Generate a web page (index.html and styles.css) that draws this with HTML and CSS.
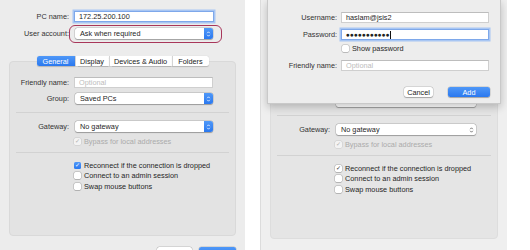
FILE: index.html
```html
<!DOCTYPE html>
<html lang="en">
<head>
  <meta charset="UTF-8" />
  <meta name="viewport" content="width=device-width, initial-scale=1.0"/>
  <title>Add PC</title>
  <link rel="stylesheet" href="styles.css">
</head>
<body>
<div class="win">
  <div class="head">
    <div class="row"><span class="lbl">PC name:</span><div class="field focus">172.25.200.100</div></div>
    <div class="row gap6"><span class="lbl">User account:</span>
      <div class="popup marked">Ask when required<span class="step"><svg viewBox="0 0 5 8"><path d="M1.2 3.2 2.5 1.8 3.8 3.2M1.2 4.8 2.5 6.2 3.8 4.8"/></svg></span></div>
    </div>
  </div>
  <div class="tabs">
    <span class="tab on w38">General</span><span class="tab w34">Display</span><span class="tab w63">Devices &amp; Audio</span><span class="tab w37">Folders</span>
  </div>
  <div class="group">
    <div class="row"><span class="lbl">Friendly name:</span><div class="field ph">Optional</div></div>
    <div class="row gap5"><span class="lbl">Group:</span>
      <div class="popup">Saved PCs<span class="step"><svg viewBox="0 0 5 8"><path d="M1.2 3.2 2.5 1.8 3.8 3.2M1.2 4.8 2.5 6.2 3.8 4.8"/></svg></span></div>
    </div>
    <div class="sep"></div>
    <div class="row"><span class="lbl">Gateway:</span>
      <div class="popup">No gateway<span class="step"><svg viewBox="0 0 5 8"><path d="M1.2 3.2 2.5 1.8 3.8 3.2M1.2 4.8 2.5 6.2 3.8 4.8"/></svg></span></div>
    </div>
    <div class="check dis"><span class="box">✓</span>Bypass for local addresses</div>
    <div class="sep sep2"></div>
    <div class="check first"><span class="box on">✓</span>Reconnect if the connection is dropped</div>
    <div class="check"><span class="box"></span>Connect to an admin session</div>
    <div class="check"><span class="box"></span>Swap mouse buttons</div>
  </div>
  <div class="actions">
    <button class="btn w35">Cancel</button><button class="btn primary w37">Add</button>
  </div>
</div>

<div class="win inactive">
  <!-- top of this window sits under the sheet -->
  <div class="head covered">
    <div class="row"><span class="lbl"></span><div class="field"></div></div>
    <div class="row gap6"><span class="lbl"></span><div class="popup"></div></div>
  </div>
  <div class="tabs covered">
    <span class="tab on w38"></span><span class="tab w34"></span><span class="tab w63"></span><span class="tab w37"></span>
  </div>
  <div class="group">
    <div class="row covered"><span class="lbl"></span><div class="field"></div></div>
    <div class="row gap5"><span class="lbl"></span>
      <div class="popup wide"></div>
    </div>
    <div class="sep"></div>
    <div class="row"><span class="lbl">Gateway:</span>
      <div class="popup wide">No gateway<span class="step"><svg viewBox="0 0 5 8"><path d="M1.2 3.2 2.5 1.8 3.8 3.2M1.2 4.8 2.5 6.2 3.8 4.8"/></svg></span></div>
    </div>
    <div class="check dis"><span class="box">✓</span>Bypass for local addresses</div>
    <div class="sep sep2"></div>
    <div class="check first"><span class="box on">✓</span>Reconnect if the connection is dropped</div>
    <div class="check"><span class="box"></span>Connect to an admin session</div>
    <div class="check"><span class="box"></span>Swap mouse buttons</div>
  </div>

  <div class="sheet">
    <div class="row"><span class="lbl">Username:</span><div class="field">haslam@jsis2</div></div>
    <div class="row gap6"><span class="lbl">Password:</span><div class="field focus"><span class="dots">●●●●●●●●●●●</span><span class="caret"></span></div></div>
    <div class="check show"><span class="box"></span>Show password</div>
    <div class="row gap7"><span class="lbl">Friendly name:</span><div class="field ph">Optional</div></div>
    <div class="actions">
      <button class="btn w29">Cancel</button><button class="btn primary w42">Add</button>
    </div>
  </div>
</div>
</body>
</html>
```

FILE: styles.css
```css
* { box-sizing: border-box; }
body {
  margin: 0;
  background: #fff;
  display: flex;
  gap: 16px;
  font-family: 'Liberation Sans', Arial, sans-serif;
  font-size: 7.3px;
  color: #262626;
  overflow: hidden;
}
.win {
  position: relative;
  width: 245px;
  height: 250px;
  padding: 0 9px;
  background: #ececec;
  overflow: hidden;
}
.win.inactive {
  width: 246px;
  background: #efefef;
  box-shadow: -1px 0 0 #dcdcdc;
}
.covered { visibility: hidden; }
.head { padding-top: 11px; }
.inactive .head { padding-top: 14px; }
.row {
  display: flex;
  align-items: center;
  height: 11px;
}
.gap5 { margin-top: 5px; }
.gap6 { margin-top: 6px; }
.gap7 { margin-top: 7px; }
.lbl {
  width: 60px;
  margin-right: 5px;
  text-align: right;
  color: #333;
  white-space: nowrap;
}
.group .lbl { width: 59px; }
.field {
  width: 140px;
  height: 11px;
  padding: 0 4px;
  display: flex;
  align-items: center;
  background: #fff;
  border: 1px solid #cfcfcf;
  border-top-color: #bdbdbd;
  white-space: nowrap;
}
.group .field { width: 139px; }
.field.ph { color: #bdbdbd; }
.field.focus {
  border-color: #7ea8ea;
  box-shadow: 0 0 0 1.5px #a8c6f3;
}
.popup {
  position: relative;
  width: 138px;
  height: 11px;
  margin-left: 1px;
  padding-left: 5px;
  display: flex;
  align-items: center;
  background: #fff;
  border-radius: 2.5px;
  box-shadow: 0 0 0 0.5px rgba(0,0,0,0.18), 0 0.5px 1px rgba(0,0,0,0.25);
  white-space: nowrap;
}
.popup.wide { width: 140px; }
.step {
  margin-left: auto;
  width: 9px;
  height: 11px;
  display: flex;
  align-items: center;
  justify-content: center;
  background: linear-gradient(#4f98f8, #2a78ef);
  border-radius: 0 2.5px 2.5px 0;
}
.step svg {
  width: 5px;
  height: 8px;
  fill: none;
  stroke: #fff;
  stroke-width: 0.8;
}
.inactive .step { background: none; }
.inactive .step svg { stroke: #555; }
.popup.marked::after {
  content: "";
  position: absolute;
  top: -3.5px;
  bottom: -3.5px;
  left: -6px;
  right: -9px;
  border: 1.5px solid #a8365a;
  border-radius: 6px;
}
.tabs {
  position: relative;
  z-index: 1;
  display: flex;
  justify-content: center;
  margin: 17px 0 -5px;
  height: 10px;
}
.tab {
  display: flex;
  align-items: center;
  justify-content: center;
  height: 10px;
  background: #fff;
  border-left: 0.5px solid #d4d4d4;
  box-shadow: 0 0.5px 1px rgba(0,0,0,0.2);
  color: #222;
}
.tab:first-child { border-radius: 2.5px 0 0 2.5px; border-left: none; }
.tab:last-child { border-radius: 0 2.5px 2.5px 0; }
.tab.on {
  background: linear-gradient(#4f98f8, #2a78ef);
  color: #fff;
}
.w38 { width: 38px; }
.w34 { width: 34px; }
.w63 { width: 63px; }
.w37 { width: 37px; }
.w35 { width: 35px; }
.w29 { width: 29px; }
.w42 { width: 42px; }
.group {
  height: 175px;
  padding-top: 15px;
  background: #e3e3e3;
  border: 1px solid #d9d9d9;
  border-radius: 4px;
}
.inactive .group { background: #e5e5e5; border-color: #dddddd; }
.sep {
  height: 1px;
  margin: 8px 6px 8px;
  background: #d2d2d2;
}
.sep2 { margin: 6px 6px 7px; }
.check {
  display: flex;
  align-items: center;
  height: 10.5px;
  padding-left: 64px;
  white-space: nowrap;
}
.check.dis {
  height: 10px;
  margin-top: 4px;
  color: #ababab;
}
.box {
  width: 7px;
  height: 7px;
  margin-right: 3px;
  display: flex;
  align-items: center;
  justify-content: center;
  background: #fff;
  border-radius: 1.5px;
  box-shadow: 0 0 0 0.5px rgba(0,0,0,0.25), 0 0.5px 0.5px rgba(0,0,0,0.2);
  font-size: 6px;
  line-height: 1;
  color: #333;
}
.dis .box { background: #f3f3f3; color: #b0b0b0; box-shadow: 0 0 0 0.5px rgba(0,0,0,0.12); }
.box.on {
  background: linear-gradient(#4f98f8, #2a78ef);
  color: #fff;
  box-shadow: none;
}
.inactive .box.on {
  background: #fff;
  color: #333;
  box-shadow: 0 0 0 0.5px rgba(0,0,0,0.25), 0 0.5px 0.5px rgba(0,0,0,0.2);
}
.actions {
  display: flex;
  justify-content: flex-end;
  gap: 7px;
  margin-top: 11px;
}
.btn {
  height: 11px;
  padding: 0;
  border: none;
  border-radius: 2.5px;
  background: #fff;
  box-shadow: 0 0 0 0.5px rgba(0,0,0,0.15), 0 0.5px 1px rgba(0,0,0,0.25);
  font-family: inherit;
  font-size: 7.3px;
  color: #222;
}
.btn.primary {
  background: linear-gradient(#4f98f8, #2a78ef);
  color: #fff;
}
.sheet {
  position: absolute;
  top: 0;
  left: 6px;
  z-index: 2;
  width: 234px;
  height: 104px;
  padding-top: 12px;
  background: #ededed;
  border: 1px solid #c9c9c9;
  border-top: none;
  box-shadow: 0 3px 8px rgba(0,0,0,0.22);
}
.sheet .lbl { width: 69px; margin-right: 4px; }
.sheet .field { width: 148px; }
.sheet .check.show {
  height: 9px;
  margin-top: 4px;
  padding-left: 74px;
}
.dots {
  font-size: 6.6px;
  letter-spacing: 0;
  color: #222;
}
.caret {
  width: 1px;
  height: 8px;
  margin-left: 0.5px;
  background: #111;
}
.sheet .actions {
  gap: 15px;
  margin-top: 16px;
  padding-right: 10px;
}
.sheet .btn { height: 10px; }
```
